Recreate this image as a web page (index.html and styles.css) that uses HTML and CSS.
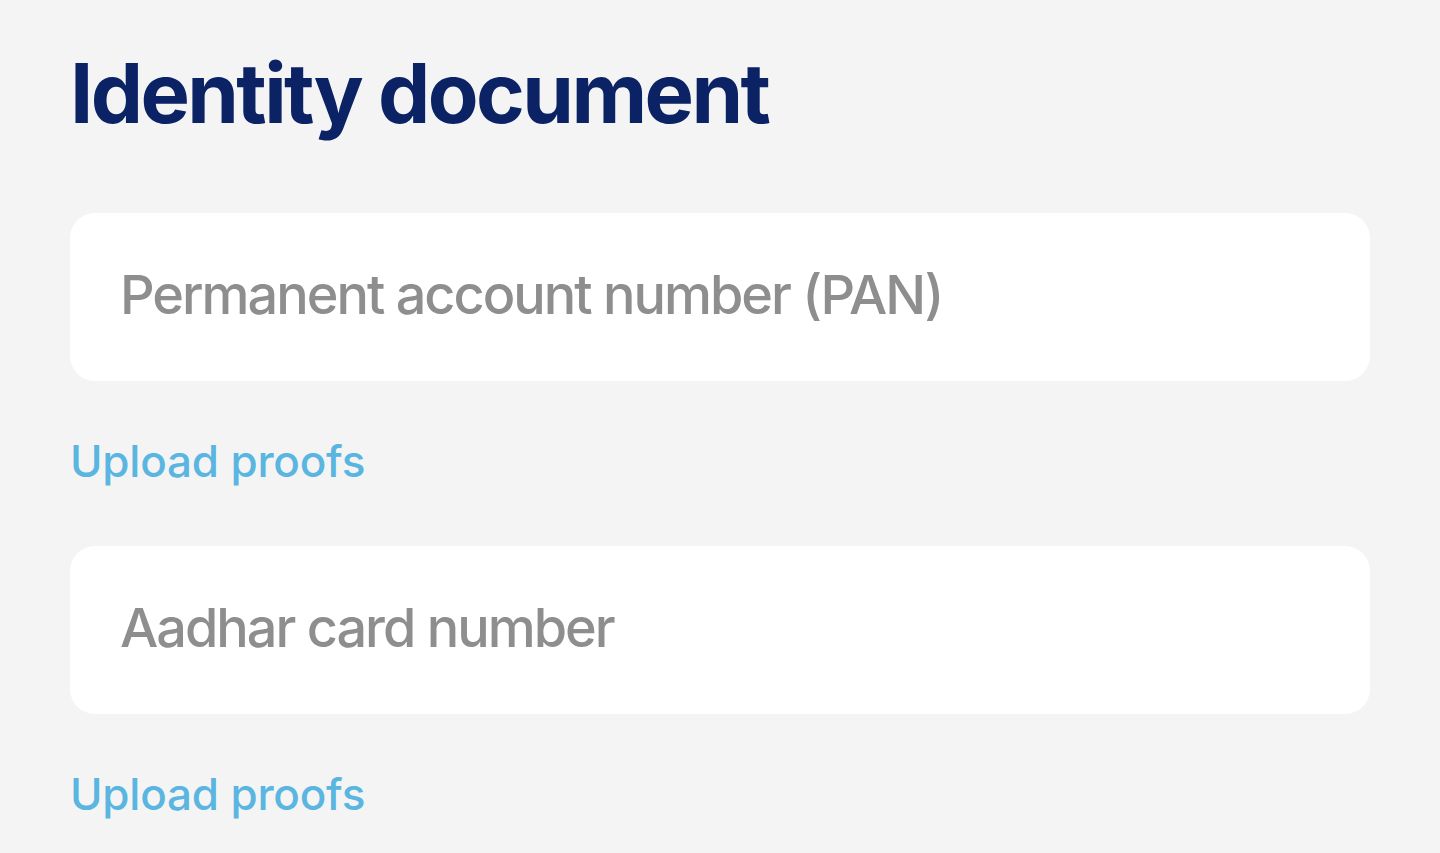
FILE: index.html
```html
<!DOCTYPE html>
<html lang="en">
<head>
    <meta charset="UTF-8">
    <meta name="viewport" content="width=device-width, initial-scale=1.0">
    <title>Identity document</title>
    <link rel="stylesheet" href="styles.css">
</head>
<body>
    <!-- Identity document section -->
    <div class='container'>
        <h1 class='title'>Identity document</h1>

        <div class='field'>
            <input type="text" class='field-input' id='input-pan' placeholder="Permanent account number (PAN)" />
            <a href="#" class='upload-link'>Upload proofs</a>
        </div>

        <div class='field'>
            <input type="text" class='field-input' id='input-aadhar' placeholder="Aadhar card number" />
            <a href="#" class='upload-link'>Upload proofs</a>
        </div>
    </div>
</body>
</html>
```

FILE: styles.css
```css
/* Styles for layout and appearance */
body {
    margin: 0;
    background: #f4f4f4;
    font-family: Inter, "Noto Sans", sans-serif;
}
.container {
    padding: 43px 70px 0 70px;
    display: flex;
    flex-direction: column;
}
.title {
    margin: 0 0 70px 0;
    font-size: 83px;
    line-height: 100px;
    font-weight: 700;
    letter-spacing: -2.6px;
    color: #0b2265;
}
.field {
    display: flex;
    flex-direction: column;
    margin-bottom: 57px;
}
.field-input {
    box-sizing: border-box;
    width: 100%;
    height: 168px;
    border: none;
    border-radius: 25px;
    background: #fff;
    padding: 0 50px 6px 50px;
    font-family: inherit;
    font-size: 54px;
    font-weight: 500;
    letter-spacing: -2px;
    color: #333;
    outline: none;
}
.field-input::placeholder {
    color: #8e8e8e;
}
.upload-link {
    margin-top: 52px;
    font-size: 44px;
    line-height: 56px;
    letter-spacing: -0.2px;
    font-weight: 500;
    color: #5ab6e1;
    text-decoration: none;
}
```
